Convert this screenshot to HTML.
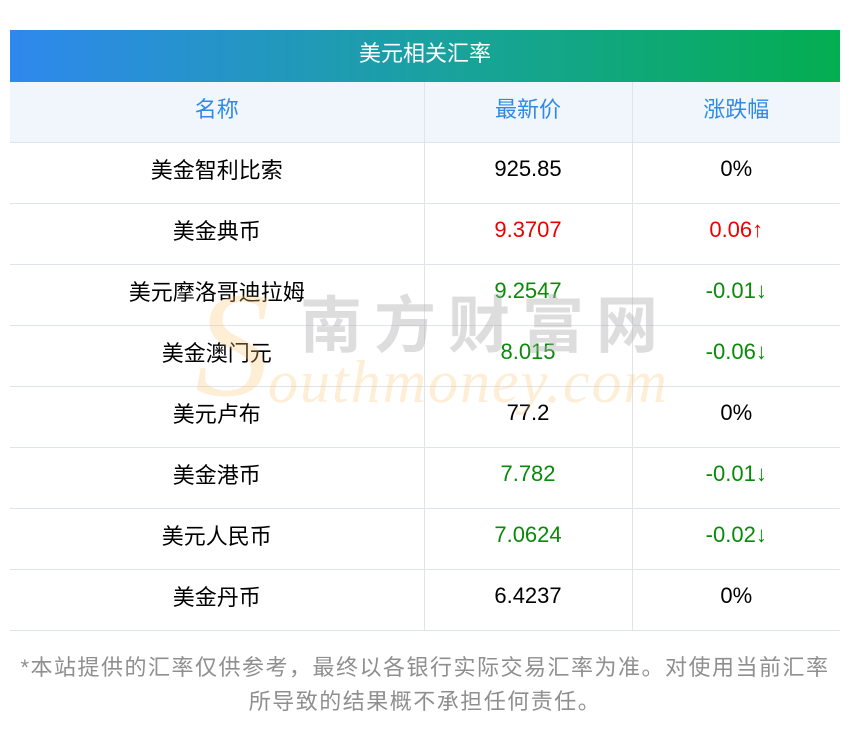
<!DOCTYPE html>
<html><head><meta charset="utf-8"><style>
body{margin:0;width:850px;height:733px;background:#fff;font-family:"Liberation Sans","Noto Sans CJK SC",sans-serif;position:relative;overflow:hidden}
.title{position:absolute;left:10px;top:30px;width:830px;height:52px;background:linear-gradient(90deg,#2f88ee,#18a39a 55%,#04ae50);color:#fff;font-size:22px;line-height:48px;text-align:center}
table{position:absolute;left:10px;top:82px;width:830px;border-collapse:collapse;font-size:22px;z-index:1}
td,th{border-bottom:1px solid #dfe3ea;text-align:center;padding:0 0 7px 0;font-weight:normal;box-sizing:border-box}
td{height:61px}
td+td,th+th{border-left:1px solid #dfe3ea}
th{background:#f1f6fd;color:#2f8ae6;height:60px}
.r{color:#e00}.g{color:#0a8a0a}
.wm{position:absolute;z-index:2;pointer-events:none}
.foot{position:absolute;left:0;top:651px;width:850px;text-align:center;color:#8f8f8f;font-size:22px;line-height:34px;letter-spacing:1.5px}
</style></head><body>
<div class="title">美元相关汇率</div>
<table>
<tr><th style="width:414px">名称</th><th style="width:208px">最新价</th><th>涨跌幅</th></tr>
<tr><td>美金智利比索</td><td>925.85</td><td>0%</td></tr>
<tr><td>美金典币</td><td class="r">9.3707</td><td class="r">0.06↑</td></tr>
<tr><td>美元摩洛哥迪拉姆</td><td class="g">9.2547</td><td class="g">-0.01↓</td></tr>
<tr><td>美金澳门元</td><td class="g">8.015</td><td class="g">-0.06↓</td></tr>
<tr><td>美元卢布</td><td>77.2</td><td>0%</td></tr>
<tr><td>美金港币</td><td class="g">7.782</td><td class="g">-0.01↓</td></tr>
<tr><td>美元人民币</td><td class="g">7.0624</td><td class="g">-0.02↓</td></tr>
<tr><td>美金丹币</td><td>6.4237</td><td>0%</td></tr>
</table>
<div class="wm" style="left:195px;top:270px;font-size:150px;font-family:'Liberation Serif',serif;font-style:italic;color:rgba(253,200,120,0.3);line-height:150px">S</div>
<div class="wm" style="left:300px;top:292px;font-size:62px;font-weight:bold;color:rgba(170,170,170,0.4);letter-spacing:12px;line-height:70px">南方财富网</div>
<div class="wm" style="left:268px;top:350px;font-size:60px;font-family:'Liberation Serif',serif;font-style:italic;color:rgba(253,200,120,0.3);letter-spacing:2px;line-height:64px">outhmoney.com</div>
<div class="foot">*本站提供的汇率仅供参考，最终以各银行实际交易汇率为准。对使用当前汇率<br>所导致的结果概不承担任何责任。</div>
</body></html>
